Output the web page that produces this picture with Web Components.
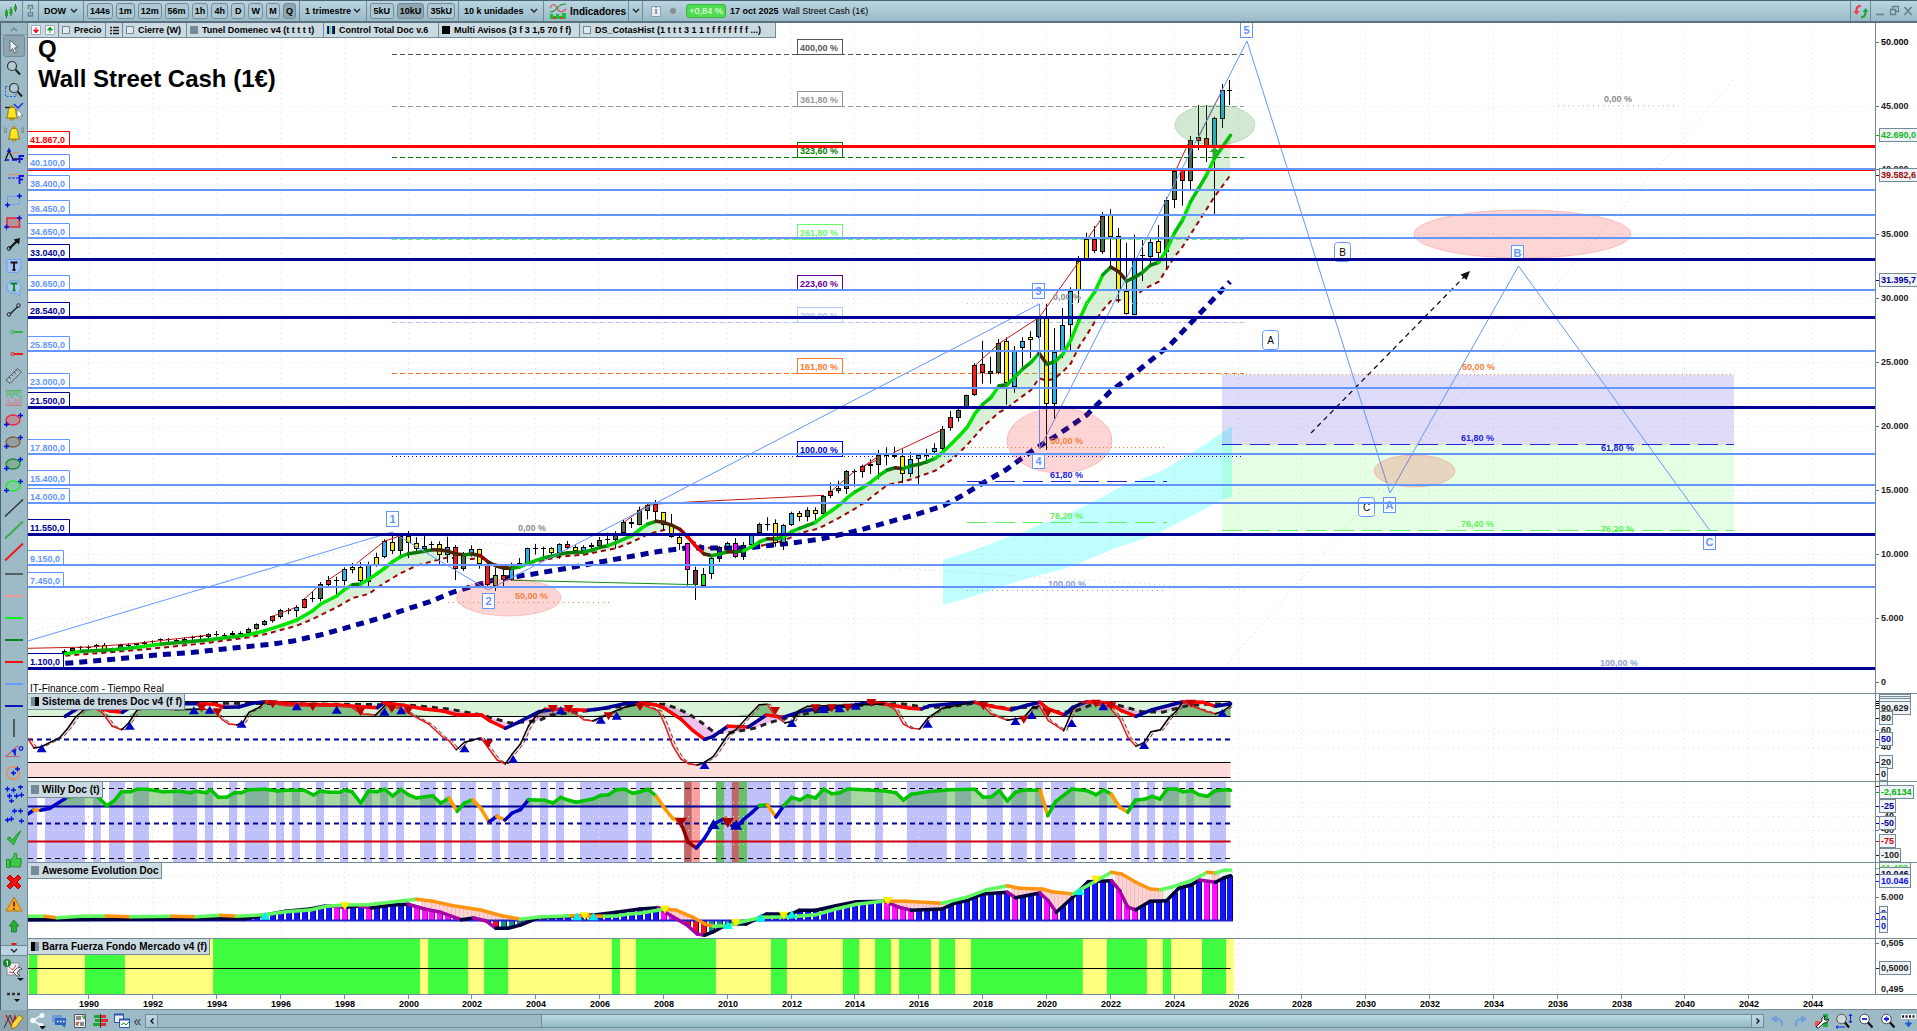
<!DOCTYPE html>
<html lang="es">
<head>
<meta charset="utf-8">
<title>DOW - Wall Street Cash (1€)</title>
<style>
html,body{margin:0;height:100%;overflow:hidden}
body{font-family:"Liberation Sans",Arial,sans-serif;font-size:10px;color:#000;background:#9dbac7}
</style>
</head>
<body>
<trading-window></trading-window>
<script>
/* ---------- shared helpers ---------- */
const BASE = `*{box-sizing:border-box}button,select,input{font:inherit;color:inherit;margin:0;padding:0;border:0;background:none}svg{display:block}`;
function define(name, css, html, setup){
  const t = document.createElement('template');
  t.innerHTML = `<style>${BASE}${css}</style>${html}`;
  customElements.define(name, class extends HTMLElement{
    connectedCallback(){
      if(this.shadowRoot) return;
      this.attachShadow({mode:'open'}).append(t.content.cloneNode(true));
      if(setup) setup(this, this.shadowRoot);
    }
  });
}
const svg = (w,h,body)=>`<svg width="${w}" height="${h}" viewBox="0 0 ${w} ${h}" fill="none" aria-hidden="true">${body}</svg>`;
const plus = (x,y)=>`<path d="M${x-2} ${y}h5M${x+.5} ${y-2.5}v5" stroke="#0010e0" stroke-width="1.3"/>`;
const lens = `<circle cx="7" cy="6" r="4.5" fill="#b4cbd5" stroke="#333" stroke-width="1.2"/><path d="M10.5 9.5l4.500 5" stroke="#222" stroke-width="2"/>`;
const bell = (x,y)=>`<path d="M${x-6} ${y+9}q2-1 2-5q0-6 4-6q4 0 4 6q0 4 2 5z" fill="#ffe620" stroke="#86700a" stroke-width=".9"/><path d="M${x-2} ${y+9.500}h4v1.500h-4zM${x-1} ${y-3.500}h2v2h-2z" fill="#d8b800" stroke="#86700a" stroke-width=".5"/>`;
const ell = (s,f)=>svg(20,16,`<ellipse cx="9" cy="8" rx="7" ry="5" fill="${f}" stroke="${s}" stroke-width="1.3"/>${plus(2,12.500)}${plus(16,3.500)}`);
const hl = (c,w)=>svg(20,16,`<path d="M1 8h18" stroke="${c}" stroke-width="${w}"/>`);
const dl = (c,w)=>svg(20,18,`<path d="M1 17.500L19 .5" stroke="${c}" stroke-width="${w}"/>`);

const ICON = {
  cursor: svg(20,16,`<path d="M6 2v11l2.500-2.500 2 4.500 2-1-2-4.200h3.500z" fill="#f4f8fa" stroke="#5c6b74"/>`),
  lens: svg(18,16,lens),
  lensbox: svg(20,16,`<path d="M1.500 4.500H12v10H1.500z" stroke="#1668d8" stroke-dasharray="2 1.500"/><g transform="translate(3)">${lens}</g>`),
  bellline: svg(20,18,`<path d="M1 4.500h9" stroke="#222" stroke-width="1.500"/><path d="M10 1l4 4 5-5" stroke="#1030e8" stroke-width="1.400"/>${bell(8,6)}<path d="M13 6v9l2-2 1.500 3.500 1.500-.8-1.500-3.200H19z" fill="#fff" stroke="#777" stroke-width=".8"/>`),
  bell: svg(20,16,`${bell(10,4)}<path d="M3 2q-2 2-.5 5M17 2q2 2 .5 5M1 1q-2 3 0 6M19 1q2 3 0 6" stroke="#777" stroke-width=".8"/>`),
  fibo1: svg(20,16,`<path d="M1 13L5 3l4 8h6" stroke="#111" stroke-width="1.300"/><path d="M6 4.500h9" stroke="#f08050" stroke-dasharray="1.500 1"/><path d="M1 12h4M8 12h5M5 0v5M3 3h4" stroke="#1010e0" stroke-width="1.500"/><path d="M15.500 15V8H20M15.500 11H19" stroke="#1010e0" stroke-width="1.800"/>`),
  fibo2: svg(20,16,`<path d="M4 4.500h11" stroke="#f08050" stroke-width="1.500" stroke-dasharray="1.500 1"/><path d="M4 8h11" stroke="#4050e8" stroke-width="1.500" stroke-dasharray="3 1"/><path d="M15.500 14V6H20M15.500 9.500H19" stroke="#1010e0" stroke-width="1.800"/>`),
  rect1: svg(20,16,`<path d="M3.500 4.500h12v8h-12z" stroke="#6d9cf8"/>${plus(3,13)}${plus(15,4)}`),
  rect2: svg(20,16,`<path d="M3 4h12.500v9H3z" fill="#b0959f" stroke="#f02030" stroke-width="1.500"/>${plus(2,13)}${plus(15,4)}`),
  arrow: svg(20,16,`<path d="M5.500 12.500L13 5" stroke="#111" stroke-width="2.200"/><circle cx="5" cy="12.500" r="1.800" stroke="#111"/><path d="M9.500 3.500L16 2l-1 6.500z" fill="#111"/>`),
  note: svg(20,16,`<path d="M4 1.500h12q1 0 1 1V11l-3.500 3.500H4q-1 0-1-1v-11q0-1 1-1z" fill="#a4c2f0" stroke="#6d9cf8"/><path d="M6.500 4.500h7M10 4.500v7.500M8.500 12h3" stroke="#111" stroke-width="1.800"/>`),
  bubble: svg(20,18,`<path d="M10 1.500a7 6.500 0 1 0 0 13q1 0 2-.4l3.500 3-.5-4.500A7 6.500 0 0 0 10 1.500z" fill="#a4cbe8" stroke="#6d9cf8"/><path d="M6.500 4.500h7M10 4.500v7M8.500 11.500h3" stroke="#168028" stroke-width="1.800"/>`),
  seg: svg(20,16,`<path d="M6 12L14 4.500" stroke="#222" stroke-width="1.400"/><circle cx="5" cy="12.500" r="1.800" stroke="#222"/><circle cx="14.500" cy="3.500" r="1.800" stroke="#222"/>`),
  rayg: svg(20,16,`<path d="M10 8h9" stroke="#35b045" stroke-width="2"/><circle cx="8.500" cy="8" r="1.600" stroke="#35b045"/>`),
  rayr: svg(20,16,`<path d="M10 8h9" stroke="#f01818" stroke-width="2"/><circle cx="8.500" cy="8" r="1.600" stroke="#f01818"/>`),
  ruler: svg(20,18,`<path d="M2 13L13.500 1.500l4 3.500L6 16.500z" fill="#a8bcc6" stroke="#556" /><path d="M5 10l2 2M7.500 7.500l1.500 1.500M10 5l2 2M12.300 2.700l1.500 1.500" stroke="#556"/>`),
  wave: svg(20,18,`<path d="M2 1h16v8H2z" fill="#7cb894"/><path d="M2 9h16v8H2z" fill="#b3a2ab"/><path d="M2 1.500h16" stroke="#38a050" stroke-dasharray="1 1"/><path d="M2 16.500h16" stroke="#e05060" stroke-dasharray="1 1"/><path d="M2 11l3-4 3 6 3-7 2 4 4-6" stroke="#a8c0ff"/>`),
  vline: svg(20,18,`<path d="M10 0v18" stroke="#222" stroke-width="1.300"/>`),
  angle: svg(20,16,`<path d="M16 14.500H2L14 3.500" stroke="#d06070" stroke-width="1.200"/><path d="M8.500 9q4 1 2.500 5M8 8.500l4-1-1 4z" stroke="#1020e0" fill="#1020e0"/><circle cx="17" cy="6.500" r="1.800" stroke="#1020e0" stroke-width="1.300"/>`),
  circ: svg(20,16,`<circle cx="9" cy="9" r="6.300" stroke="#f08850" stroke-width="1.400"/>${plus(9,9)}${plus(13,5)}`),
  elliott: svg(20,18,`<path d="M2 5l3 9 4-9 3 8 5-10" stroke="#7d9ef8"/>${plus(3,4)}${plus(9,5)}${plus(16,2)}${plus(5,11)}${plus(12,11)}${plus(17,10)}${plus(7,16)}`),
  abc: svg(20,18,`<path d="M4 2l13 13M3 13L14 3" stroke="#7d9ef8"/>${plus(10,4)}${plus(16,4)}${plus(7,12)}${plus(17,14)}${plus(3,13)}`),
  check: svg(20,16,`<path d="M3 8.500l3-1.500 2.500 3.500Q12 4 17 .8q-4 6-7.500 14z" fill="#30c83c" stroke="#128820" stroke-width=".8"/>`),
  thumb: svg(20,18,`<path d="M2.500 8.500H6v8H2.500zM6.500 9q4-2 4-7 2.500-.5 2.500 2.500l-.5 3H17q1 3-.8 8.500H8l-1.500-1z" fill="#3fc84a" stroke="#1c8a28" stroke-width=".9"/>`),
  cross: svg(20,16,`<path d="M3 4l3-3 4 4 4-4 3 3-4 4 4 4-3 3-4-4-4 4-3-3 4-4z" fill="#f01010" stroke="#b00"/>`),
  warn: svg(20,16,`<path d="M10 1l8 14H2z" fill="#f5a820" stroke="#b87812" stroke-linejoin="round"/><path d="M10 5.500v5M10 12v1.800" stroke="#6b2a00" stroke-width="1.800"/>`),
  up: svg(20,16,`<path d="M10 2l5 6h-2.500v6h-5V8H5z" fill="#2eaa36" stroke="#167a1c" stroke-width=".8"/>`),
  gear: svg(24,24,`<path d="M5 5h12v12H5z" fill="#eef2f4" stroke="#889"/><path d="M7 9l4 3 3-5M7 14l6 1" stroke="#e04050"/><circle cx="5" cy="5" r="4" fill="#128a28"/><path d="M4 4l1.500-1v4.500" stroke="#fff"/><path d="M11 14l4-4q3-2 5 1l-3 1-2 3 3 3q-4 1-5-2z" fill="#f4f4f4" stroke="#333" stroke-width=".8"/><path d="M15 20h7l-3.500 3z" fill="#111"/>`),
  dots: svg(20,12,`<path d="M3 3h3M8 3h3M13 3h3" stroke="#333" stroke-width="2.500"/><path d="M10 8h6l-3 3z" fill="#111"/>`),
  pencil: svg(22,18,`<path d="M3 3l6 12 3-11 2 8" stroke="#b81820" stroke-width="1.200"/><path d="M1 16l6-13 5 12" stroke="#333"/><path d="M9 12L16 3l4 3-7 9-5 2z" fill="#ffd83a" stroke="#8a6a10" stroke-width=".8"/>`),
  candles: svg(14,15,`<path d="M2.500 5v9M7 3v9M11.500 0v8" stroke="#1b7a22"/><path d="M1 7h3v5H1zM5.500 5h3v5h-3zM10 2h3v4h-3z" fill="#27a32c"/>`),
  link: svg(8,16,`<path d="M1.500 6V2.500h4V6M1.500 9v4h4V9" stroke="#66808c" stroke-width="1.500"/><path d="M3.500 5v6" stroke="#66808c"/>`),
  ind: svg(18,17,`<path d="M1 5q4-7 7 0t9 1" stroke="#e05058" stroke-width="1.200"/><path d="M1 9q4 0 7-4t9-4" stroke="#1f8f2a" stroke-width="1.200"/><path d="M1 11h3v2h3v-2h3v2h3v-3h4v6H1z" fill="#16c030"/><path d="M4 14h3v2H4zM11 14h3v2h-3z" fill="#f03030"/>`),
  sync: svg(16,15,`<path d="M8 2Q3 1.500 3.500 8" stroke="#f04048" stroke-width="2.200"/><path d="M.5 7h6l-3 4z" fill="#f04048"/><path d="M8 13q5 .5 4.500-6" stroke="#22a830" stroke-width="2.200"/><path d="M9.500 8h6l-3-4z" fill="#22a830"/>`),
  share: svg(18,18,`<path d="M13 3L4 8.500l9 5.500" stroke="#f4f8fa" stroke-width="1.500"/><circle cx="13" cy="3.500" r="2.500" fill="#f4f8fa"/><circle cx="4" cy="8.500" r="2.800" fill="#f4f8fa"/><circle cx="12" cy="13.500" r="2.500" fill="#f4f8fa"/><path d="M10 14h7l-3.500 3.500z" fill="#111"/>`),
  chat: svg(16,16,`<path d="M1 2h10v7H5l-2 2V9H1z" fill="#6f9ad8"/><path d="M4 5h11v7h-1v3l-3-3H4z" fill="#2f66c0"/><path d="M6 8.500h1.500M9 8.500h1.500M12 8.500h1.500" stroke="#fff" stroke-width="1.500"/>`),
  doc: svg(14,16,`<path d="M1.500 1.500h11v13h-11z" fill="#f2f4f4" stroke="#556"/><path d="M3 4h5M3 6h5M7 10h4M7 12h4" stroke="#222"/><path d="M9 3l2 3 .8-3zM3 9l2 4" stroke="#1da030"/><path d="M3 12l3-3" stroke="#e02828" stroke-width="1.500"/>`),
  book: svg(16,16,`<path d="M1 2h6v3H1zM2 6h5v3H2zM0 10h7v3H0z" fill="#21a832"/><path d="M8 2h5v3H8zM8 6h7v3H8zM8 10h5v3H8z" fill="#e02a38"/><path d="M7.500 1v14" stroke="#333"/>`),
  wins: svg(18,16,`<path d="M1.500 1.500h9v8h-9z" fill="#eef" stroke="#2858b0"/><path d="M1 1.500h10" stroke="#2858b0" stroke-width="2"/><path d="M6.500 6.500h10v8h-10z" fill="#fff" stroke="#2858b0"/><path d="M6 6.500h11" stroke="#2858b0" stroke-width="2"/><path d="M8 12l3-2 2 2 3-3" stroke="#1b9030"/>`),
  undo: svg(14,14,`<path d="M4 5q8-1 7 7" stroke="#6f9fe0" stroke-width="2"/><path d="M0 5l6-4v8z" fill="#6f9fe0"/>`),
  redo: svg(14,14,`<path d="M10 5q-8-1-7 7" stroke="#6f9fe0" stroke-width="2"/><path d="M14 5L8 1v8z" fill="#6f9fe0"/>`),
  wrench: svg(16,16,`<path d="M1 8h5v6H1z" fill="#f05058"/><path d="M9 1h5v13H9z" fill="#22b040"/><path d="M2 14l6-6q-1-4 3-5l-1 3 2 1.500 2.500-1.500q0 4-4.500 4l-5.500 5z" fill="#fff" stroke="#222"/>`),
  zfit: svg(18,16,`<circle cx="6.500" cy="6" r="4.800" fill="#cfd8dc" stroke="#555"/><path d="M10 9.500l4 5" stroke="#111" stroke-width="2.200"/><path d="M15.500 1v9M14 3l1.500-2L17 3M14 8l1.500 2L17 8M1 14h9M3 12.500L1 14l2 1.500" stroke="#1020e0"/>`),
  zout: svg(16,16,`<circle cx="6.500" cy="6" r="4.800" fill="#fff" stroke="#445"/><path d="M4 6h5" stroke="#1020e0" stroke-width="1.800"/><path d="M10 9.500l4.500 5" stroke="#111" stroke-width="2.200"/>`),
  zin: svg(16,16,`<circle cx="6.500" cy="6" r="4.800" fill="#fff" stroke="#445"/><path d="M4 6h5M6.500 3.500v5" stroke="#1020e0" stroke-width="1.800"/><path d="M10 9.500l4.500 5" stroke="#111" stroke-width="2.200"/>`),
  kbd: svg(15,14,`<path d="M0 0h15v5H0z" fill="#f4f4f4"/><path d="M1 2.500h13" stroke="#222" stroke-width="2.500" stroke-dasharray="2 1.500"/><path d="M7.500 6v4M4.500 9h6l-3 4z" stroke="#1c5fd0" fill="#1c5fd0"/>`),
  chev: svg(8,6,`<path d="M1 1l3 3 3-3" stroke="#223" stroke-width="1.400"/>`),
  list: svg(9,9,`<path d="M0 1.500h2M0 4.500h2M0 7.500h2M3 1.500h6M3 4.500h6M3 7.500h6" stroke="#222" stroke-width="1.300"/>`),
  dn: svg(10,10,`<path d="M.5.5h9v9h-9z" fill="#fff" stroke="#9ab"/><path d="M5 2v3M2.500 5h5L5 8z" stroke="#e02028" fill="#e02028"/>`),
  upg: svg(10,10,`<path d="M.5.5h9v9h-9z" fill="#fff" stroke="#9ab"/><path d="M5 8V5M2.500 5h5L5 2z" stroke="#18a028" fill="#18a028"/>`)
};

/* ---------- geometry of the data blocks (each block has its own origin) ---------- */
const N = s => s.trim().split(/\s+/).map(p=>p.split(',').map(Number));
const block = (ox,oy,k)=> s => N(s).map(([x,y])=>[ox+x/k, oy+y/3]);
const T1=block(0,240,3), T2=block(380,440,3), T3=block(860,200,3), T4=block(600,0,2.45);
const L=block(0,680,2.45), R=block(640,680,2.45);
const QX = i => 65.4 + 7.98*i;              // centre of quarter i
const YX = y => 89.4 + (y-1990)*31.92;      // start of year y
const PY = v => 682 - v*.0128;              // price to height
const END = 1230.6;
const d = p => p.map(([x,y],i)=>(i?'L':'M')+x.toFixed(1)+' '+y.toFixed(1)).join('');
const path = (p,c,w,extra='')=>`<path d="${typeof p==='string'?p:d(p)}" stroke="${c}" stroke-width="${w}" fill="none" ${extra}/>`;
const hline = (y,x1,x2,c,w,dash='')=>`<path d="M${x1} ${y}H${x2}" stroke="${c}" stroke-width="${w}" ${dash?`stroke-dasharray="${dash}"`:''}/>`;
const rect = (x,y,w,h,f,extra='')=>`<rect x="${x.toFixed(1)}" y="${y.toFixed(1)}" width="${w.toFixed(1)}" height="${h.toFixed(1)}" fill="${f}" ${extra}/>`;
const text = (x,y,s,c,cls='t')=>`<text x="${x}" y="${y}" fill="${c}" class="${cls}">${s}</text>`;
const tri = (p,dir,c,w=5,h=4)=>p.map(([x,y])=>`<path d="M${(x-w).toFixed(1)} ${(y+dir*h).toFixed(1)}h${2*w}l${-w} ${-dir*2*h}z" fill="${c}"/>`).join('');
function sample(p,x){ for(let i=1;i<p.length;i++) if(x<=p[i][0]){const a=p[i-1],b=p[i];return a[1]+(b[1]-a[1])*(x-a[0])/((b[0]-a[0])||1);} return p[p.length-1][1]; }
function twoTone(p,pick,w){ return p.slice(1).map((b,i)=>`<path d="M${p[i][0].toFixed(1)} ${p[i][1].toFixed(1)}L${b[0].toFixed(1)} ${b[1].toFixed(1)}" stroke="${pick(p[i],b)}" stroke-width="${w}" stroke-linecap="round"/>`).join(''); }
function grid(y1,y2,hs){
  let o='';
  for(let y=1990;y<=2060;y+=2) o+=`<path d="M${Math.round(YX(y))-.5} ${y1}V${y2}" stroke="#e2e2e2" stroke-dasharray="1 4"/>`;
  hs.forEach(h=>o+=hline(Math.floor(h)+.5,28,4000,'#e2e2e2',1,'1 4'));
  return o;
}

/* ---------- price pane ---------- */
const BODY={g:'#4f6b4f',y:'#f7ee10',b:'#28b4e8',r:'#fa1c1c',o:'#7fa848',m:'#ff00ff',w:'#6e3348',l:'#10f010',c:'#20f0f0',n:'#1414a0',k:'#111'};
const candles1=`1228 1234 1240 1244 g|1222 1223 1234 1238 g|1218 1222 1224 1230 k|1216 1220 1223 1232 k|1212 1216 1222 1226 g|1209 1215 1235 1238 y|1223 1225 1235 1238 b|1211 1216 1226 1232 g|1210 1215 1217 1224 k|1209 1210 1216 1220 g|1203 1206 1212 1222 g|1201 1202 1205 1211 k|1195 1198 1200 1207 k|1194 1198 1201 1208 k|1197 1201 1204 1212 k|1192 1196 1202 1208 g|1187 1192 1194 1201 k|1185 1189 1192 1198 k|1180 1182 1190 1195 g|1173 1182 1185 1190 k|1179 1184 1187 1193 k|1173 1180 1186 1194 g|1174 1179 1182 1188 k|1163 1168 1180 1184 g|1150 1153 1168 1171 g|1140 1144 1154 1157 g|1127 1129 1144 1148 r|1107 1111 1130 1136 g|1104 1110 1112 1123 k|1096 1102 1112 1132 b|1074 1077 1103 1105 r|1054 1075 1078 1086 k|1026 1033 1076 1084 g|1008 1020 1034 1039 r|1010 1020 1023 1063 k|982 988 1024 1036 b|969 982 990 1000 y|966 982 1024 1036 y|965 974 1027 1038 b|938 952 974 980 y|898 904 952 955 b|886 906 932 942 y`;
const candles2=`283 288 332 345 g|273 287 308 354 y|292 310 326 336 y|288 318 326 338 b|304 313 316 334 k|304 312 346 372 y|290 322 346 368 b|315 321 388 420 r|336 342 388 393 g|316 328 342 350 b|326 328 372 386 y|362 376 436 440 r|384 405 437 453 o|384 405 421 438 r|368 381 421 422 b|354 370 384 386 b|323 325 370 372 b|312 325 328 344 k|320 325 328 348 k|322 325 340 348 y|310 312 340 356 b|303 313 323 328 r|316 322 332 340 y|316 321 332 344 b|308 316 322 337 b|291 300 317 320 g|278 298 301 319 k|274 278 300 326 g|240 246 278 280 g|234 246 253 264 r|200 210 254 256 g|190 194 212 238 g|180 192 217 240 r|216 217 256 270 y|222 254 292 293 y|278 290 311 330 y|308 310 391 437 m|380 391 434 480 w|384 403 437 438 l|348 355 403 417 c|318 322 356 366 n|305 310 322 336 b|294 310 352 354 m|306 314 352 360 n|282 286 314 320 b|248 252 279 284 g|232 251 254 272 k|238 250 308 320 y|252 256 308 330 b|215 219 256 258 b|213 220 232 244 y|202 210 232 244 g|202 210 223 246 y|165 167 223 224 g|128 153 167 174 r|122 145 154 160 g|90 92 146 162 g|88 92 95 140 k`;
const candles3=`794 799 815 833 r|778 793 798 822 r|750 764 794 838 g|742 764 766 796 k|740 765 769 775 r|748 769 821 850 y|757 778 821 832 b|760 766 778 852 b|746 758 768 792 b|730 745 757 760 b|678 688 746 750 g|633 652 683 692 r|625 629 654 665 g|584 586 622 626 g|490 496 586 588 r|422 493 520 551 r|470 513 523 551 g|417 430 520 523 g|412 424 550 614 y|438 452 562 578 b|412 423 445 500 b|394 411 419 474 y|350 352 412 415 g|312 347 613 750 y|384 457 613 656 b|324 376 457 474 b|262 272 376 450 b|168 183 270 308 y|98 117 178 180 y|78 117 154 160 r|36 48 155 162 g|28 46 110 208 y|84 109 274 308 y|128 274 341 344 y|104 173 344 346 b|120 165 168 243 k|114 127 170 197 b|75 124 160 176 y|-8 1 155 206 g|-90 -88 -1 24 g|-92 -90 58 17 r|-192 -179 -58 -32 g|-285 -188 -178 -150 r|-285 -185 -160 -114 r|-250 -245 -155 42 b|-348 -330 -244 -216 b|-360 -330 -328 -285 k`.replace('-90 58 17','-90 -58 17');
function candleRun(src,start,oy){
  return src.split('|').map((row,n)=>{
    const [h,t,b,l,c]=row.split(' '); const x=Math.round(QX(start+n)), Y=v=>oy+v/3;
    const top=Math.round(Y(+t)), bot=Math.max(top+1,Math.round(Y(+b)));
    let o=`<path d="M${x-.5} ${Y(+h).toFixed(1)}V${Y(+l).toFixed(1)}" stroke="#000"/>`;
    if(c==='k') o+=`<path d="M${x-3} ${top+.5}h5" stroke="#000"/>`;
    else o+=`<rect x="${x-2.5}" y="${top+.5}" width="4" height="${Math.max(1,bot-top-1)}" fill="${BODY[c]}" stroke="#000"/>`;
    return o;
  }).join('');
}
const onQ = (s,oy)=>N(s).map(([i,y])=>[QX(i),oy+y/3]);
const MA=[...onQ('0,1241 2,1234 6,1229 9,1222 12,1212 15,1206 18,1199 21,1190 23,1184 25,1172 27,1157 29,1140 31,1112 32,1092 34,1068 35,1048 36,1034 37,1032 38,1018 39,1002',240),
 ...onQ('40,385 41,365 42,350 43,341 45,334 46,329 47,330 48,334 49,342 50,344 51,342 52,347 53,366 54,378 55,385 56,385 57,380 58,370 59,361 60,353 61,348 62,342 63,338 64,337 65,336 66,330 67,322 68,317 69,308 70,297 71,287 72,268 73,252 74,244 75,247 76,256 77,268 78,291 79,319 80,341 81,347 82,342 83,335 84,336 85,332 86,320 87,305 88,296 89,297 90,291 91,275 92,265 93,256 94,247 95,228 96,212 97,195 98,173 99,155',440),
 ...onQ('100,862 101,845 102,826 103,810 104,803 105,806 106,797 107,793 108,785 109,775 110,755 111,732 112,708 113,682 114,640 115,612 116,592 117,557 118,554 119,530 120,506 121,487 122,460 123,492 124,485 125,462 126,420 127,362 128,310 129,275 130,224 131,201 132,215 133,243 134,232 135,217 136,195 137,187 138,150 139,98 140,60 141,5 142,-35 143,-75 144,-125 145,-160 146,-194',200)];
const LOW=[...onQ('0,1247 6,1236 9,1230 12,1223 15,1216 18,1208 23,1192 25,1183 27,1170 29,1157 31,1137 32,1125 34,1102 36,1074 38,1062',240),
 ...onQ('40,428 42,400 44,377 46,364 47,358 48,352 49,356 50,358 51,357 52,352 53,368 55,380 57,378 58,370 60,360 62,350 65,344 67,334 69,325 71,306 73,283 75,270 77,268 78,294 79,310 80,320 81,325 82,330 83,335 85,330 87,318 89,308 90,302 92,280 94,268 95,258 97,233 99,205',440),
 ...onQ('100,910 103,855 104,850 106,838 109,812 111,780 113,735 115,680 117,637 118,625 119,605 121,570 122,535 123,542 124,535 125,515 126,490 127,440 128,405 129,365 130,330 131,303 132,300 133,305 134,290 135,270 136,257 137,245 138,208 139,170 140,140 142,65 144,-10 146,-75',200)];
const SLOW=[...T1('196,1270 340,1258 460,1246 580,1237 700,1224 820,1212 880,1203 960,1185 1040,1163 1120,1140'),
 ...T2('15,530 60,514 150,485 220,456 300,432 350,418 460,402 560,385 660,366 760,348 840,334 920,324 1100,324 1210,312 1320,298'),
 ...T3('0,990 90,965 170,943 250,917 310,885 350,860 440,808 520,750 600,700 680,645 750,575 830,515 930,435 1010,350 1110,245')];
const maTone=(a,b)=>{const s=(a[1]-b[1])/(b[0]-a[0])*250/(682-a[1]);return s>.9?'#00e400':s>.65?'#00c40a':s>.4?'#00a00a':s>.02?'#067a06':s>-1.1?'#4c2405':s>-1.6?'#980404':'#ec0000';};
const NAVY='#000096', SKY='#6496ff';
const LEVELS=[[40100,SKY],[38400,SKY],[36450,SKY],[34650,SKY],[33040,NAVY],[30650,SKY],[28540,NAVY],[25850,SKY],[23000,SKY],[21500,NAVY],[17800,SKY],[15400,SKY],[14000,SKY],[11550,NAVY],[9150,SKY],[7450,SKY],[1100,NAVY],[41867,'#ff0000']];
const es=v=>String(v).replace(/(\d)(\d{3})$/,'$1.$2')+',0';
const FIB=[[54,'400,00 %','#555','5 3'],[106,'361,80 %','#969696','5 3'],[157,'323,60 %','#008000','5 3'],[239,'261,80 %','#6cf66c','5 3'],[290,'223,60 %','#6a0098','5 3'],[322,'200,00 %','#b4c6ff','5 3'],[373,'161,80 %','#ff7a30','5 3'],[456,'100,00 %','#0000d8','1 3']];
const oval=(x1,x2,y1,y2,f,s)=>`<ellipse cx="${(x1+x2)/2}" cy="${(y1+y2)/2}" rx="${(x2-x1)/2}" ry="${(y2-y1)/2}" fill="${f}" stroke="${s}"/>`;
const PINK='rgba(250,20,20,.18)', PINKS='rgba(250,90,90,.3)';
const tag=(x,y,s)=>`<rect x="${x+.5}" y="${y+.5}" width="12" height="15" fill="#fff" stroke="${SKY}"/><text x="${x+6.5}" y="${y+12}" text-anchor="middle" fill="${SKY}" class="wave">${s}</text>`;
const note=(x,y,s)=>`<rect x="${x+.5}" y="${y+.5}" width="16" height="19" rx="3" fill="#fff" fill-opacity=".85" stroke="${SKY}"/><text x="${x+8.5}" y="${y+14}" text-anchor="middle" class="note">${s}</text>`;
const redRuns=[T1('84,1225 268,1221 412,1210 628,1185'),T1('817,1129 889,1102'),T1('913,1077 961,1033'),T1('985,1020 1033,988'),T1('1070,970 1153,904 1201,887'),T2('733,246 805,193 829,191'),T2('829,192 930,186 1330,166'),T2('1354,153 1426,92'),T2('1450,79 1498,57'),T3('10,799 58,767'),T3('100,758 250,688'),T3('346,496 418,430 538,352 658,183'),T3('682,117 730,48'),T4('1413,505 1445,421'),T4('1466,412 1525,270')];
function drawPrice(){
  let o=grid(23,694,[5,10,15,20,25,30,35,45].map(k=>PY(k*1000)));
  o+=path('M28 633L392 537L880 567L1245 590M1225 667L1734 79','#cfcfcf',1,'stroke-dasharray="1 4"');
  o+=`<path d="${d(T3('249,1080 322,1057 490,995 540,973 600,955 700,905 780,862 830,843 900,815 985,765 1116,679 1116,890 1090,898 1000,945 900,997 840,1020 760,1047 640,1097 600,1110 520,1130 440,1155 322,1195 249,1215'))}z" fill="rgba(0,255,255,.25)"/>`;
  o+=rect(1222,375,512,70,'rgba(20,10,210,.14)')+rect(1222,445,512,86,'rgba(0,255,0,.1)');
  FIB.forEach(([y,s,c,ds])=>{ o+=`<rect x="797.5" y="${y-14.5}" width="45" height="15" fill="#fff" stroke="${c}"/>`+text(800,y-3,s,c)+hline(y+.5,392,1244,c,1,ds); });
  o+=`<path d="${d(MA)}${d([...LOW].reverse()).replace('M','L')}z" fill="rgba(90,190,90,.24)"/>`;
  o+=path(LOW,'#980808',2,'stroke-dasharray="5 4"');
  o+=path(SLOW,NAVY,5,'stroke-dasharray="8 6"');
  o+=candleRun(candles1,0,240)+candleRun(candles2,42,440)+candleRun(candles3,100,200);
  o+=twoTone(MA,maTone,3.500);
  redRuns.forEach(r=>o+=path(r,'#c01818',1));
  o+=path(T2('397,421 949,434'),'#109010',1);
  o+=path([[28,641],[392,532],[488,590],[1039.500,304],[1039.500,449],[1247,41],[1390,493],[1518.500,266],[1709.500,530]],SKY,1);
  o+=`<path d="M1214.500 147l5 5h-3v6h-4v-6h-3z" fill="#2ea82e"/>`;
  o+=oval(456.500,561,579,616,PINK,PINKS)+oval(1007,1112,408,473,PINK,PINKS)+oval(1414,1631,210,258,PINK,PINKS)+oval(1374,1455,455,487,PINK,PINKS)+oval(1175,1255,105,145,'rgba(50,150,50,.22)','rgba(70,160,70,.25)');
  o+=`<path d="M1311 433L1465 276" stroke="#111" stroke-width="1.300" stroke-dasharray="5 4"/><path d="M1470 271l-9.500 3.500 6 5.500z" fill="#111"/>`;
  const OR='#f58040',BL='#2424d8',GR='#60f060',GY='#8c8c8c',BG='#8ea2d0';
  o+=hline(374.500,1222,1734,OR,1,'1 3')+hline(444.500,1222,1734,BL,1,'20 8')+hline(530.500,1222,1734,GR,1,'20 8')+hline(105.500,1558,1676,'#c8c8c8',1,'1 4');
  o+=hline(303.500,967,1164,'#c0c0c0',1,'1 4')+hline(447.500,967,1164,OR,1,'1 3')+hline(481.500,967,1167,BL,1,'20 8')+hline(522.500,967,1167,GR,1,'20 8')+hline(590.500,967,1164,'#999',1,'1 4')+hline(602.500,448,613,OR,1,'1 4');
  o+=text(1462,370,'50,00 %',OR)+text(1461,441,'61,80 %',BL)+text(1601,451,'61,80 %',BL)+text(1461,527,'76,40 %',GR)+text(1601,532,'76,20 %',GR)+text(1600,666,'100,00 %',BG)+text(1604,102,'0,00 %',GY);
  o+=text(518,531,'0,00 %',GY)+text(515,599,'50,00 %',OR)+text(1053,300,'0,00 %',GY)+text(1050,444,'50,00 %',OR)+text(1050,478,'61,80 %',BL)+text(1050,519,'76,20 %',GR)+text(1048,587,'100,00 %',BG);
  o+=tag(386,511,'1')+tag(482,593,'2')+tag(1032,283,'3')+tag(1032,453,'4')+tag(1240,22,'5')+tag(1383,497,'A')+tag(1511,245,'B')+tag(1703,534,'C');
  o+=note(1262,330,'A')+note(1334,242,'B')+note(1358,497,'C');
  LEVELS.forEach(([v,c])=>{const y=Math.round(PY(v)),w=v<10000?36:42;o+=`<path d="M28 ${y-14.500}H${28+w-.5}V${y}" fill="none" stroke="${c}"/>`+rect(28,y-14,w-1,14,'#fff')+text(30,y-3,es(v),c);});
  LEVELS.forEach(([v,c])=>{const y=Math.round(PY(v));const t=c===SKY?2:3;o+=rect(28,y-1,4000,t,c);if(v===40100)o+=rect(28,y+1,4000,1,'#ff0000');});
  o+=text(38,57,'Q','#000','big')+text(38,87,'Wall Street Cash (1€)','#000','big')+text(30,692,'IT-Finance.com - Tiempo Real','#000','src');
  return o;
}

/* ---------- oscillator panes ---------- */
const THIN=[...L('68,178 83,207 100,204 147,175 165,150 185,115 205,92 235,90 250,100 275,142 298,152 315,132 335,95 345,88 430,92 500,90 525,96 545,122 560,135 580,138 595,130 610,100 635,85 650,68 700,80 820,82 860,84 885,104 920,108 945,78 985,90 1005,105 1050,135 1085,175 1100,185 1118,212 1138,190 1178,176 1198,210 1218,243 1238,255 1255,225 1275,195 1295,140 1315,108 1335,88 1390,92 1410,105 1430,122 1452,126 1490,105 1530,85'),...R('0,75 45,95 60,135 80,200 100,240 120,255 140,258 155,252 180,232 215,168 235,152 270,105 292,77 312,76 330,110 355,132 375,125 388,95 410,82 450,80 520,78 600,75 625,92 645,135 665,148 685,150 705,118 740,88 820,68 835,72 860,105 900,124 940,116 960,88 978,80 1000,125 1038,155 1060,92 1080,70 1120,75 1150,85 1175,120 1195,175 1215,202 1235,190 1252,158 1275,152 1295,118 1315,95 1330,68 1360,85 1390,98 1410,104 1430,95 1447,80')];
const THICK=[...L('160,112 200,80 230,82 270,96 300,100 325,80 420,74 490,74 525,76 550,85 585,84 620,72 650,68 730,76 830,78 890,84 925,86 940,72 960,74 1000,82 1040,90 1085,96 1120,107 1180,108 1200,125 1238,148 1270,130 1320,98 1360,90 1440,94 1480,88 1530,74'),...R('0,72 40,78 60,88 100,120 130,155 158,181 180,172 215,142 265,144 310,108 350,115 400,95 450,88 530,78 560,70 600,75 660,88 690,90 710,80 760,75 820,70 860,82 910,92 950,78 980,70 1000,90 1040,108 1060,85 1095,68 1150,72 1180,95 1215,112 1255,92 1330,68 1380,70 1410,82 1447,74')];
const DASH=[...L('250,74 430,72 700,74 1000,78 1100,90 1180,108 1250,132 1320,125 1350,108 1440,95'),...R('0,75 60,76 90,88 120,105 150,130 180,158 215,162 280,148 320,130 380,110 460,92 560,76 640,74 700,85 760,84 820,72 900,88 960,84 1020,98 1060,100 1110,75 1170,78 1230,98 1280,100 1340,80 1400,75 1447,76')];
function drawTrenes(){
  let o=grid(694,782,[732,748]);
  o+=rect(28,702,END-28,15,'#d8f3d8')+rect(28,763,END-28,15,'#fddcdc');
  const drop=THIN.map(([x,y])=>[x,Math.min(y,717)]);
  o+=`<path d="${d(drop)}V717H28z" fill="#80c080"/>`;
  const shade=THIN.map(([x,y])=>[x+4,y]).reverse();
  o+=`<path d="${d(THIN)}${d(shade).replace('M','L')}z" fill="rgba(250,150,150,.35)"/>`;
  o+=`<path d="${d(THICK)}${d([...DASH].reverse()).replace('M','L')}z" fill="rgba(220,120,220,.45)"/>`;
  o+=hline(702.500,28,END,'#000',1)+hline(717.500,28,END,'#000',1)+hline(763.500,28,END,'#000',1)+hline(778.500,28,END,'#000',1)+hline(740.500,28,END,'#0000a0',2,'5 4');
  o+=path(DASH,'#222',3,'stroke-dasharray="6 5"');
  o+=twoTone(THICK,(a,b)=>b[1]>a[1]?'#ff0000':NAVY,3.500);
  o+=path(THIN.map(([x,y])=>[x+3,y]),'#444',1,'stroke-dasharray="4 3"');
  o+=twoTone(THIN,(a,b)=>b[1]>a[1]?'#e02020':'#000',1.500);
  o+=tri([...L('102,208 318,140 475,94 514,92 592,134 727,82 825,92 942,98 983,94 1138,208 1257,240 1374,94 1472,122 1511,110'),...R('158,258 372,132 450,90 489,88 529,80 705,134 920,126 960,108 1058,132 1135,82 1235,198 1427,102')],1,'#0000c0');
  o+=tri([...L('494,88 533,100 668,76 766,84 883,98 960,90 1001,94 1196,194 1354,90 1393,90 1491,112'),...R('0,84 331,96 430,88 470,88 509,86 567,72 841,82 940,122 999,102 1117,74 1155,82 1350,74')],-1,'#c00000');
  return o;
}
const WIL=[...L('68,405 83,393 100,394 122,388 165,355 190,350 230,345 245,360 262,380 280,365 298,338 320,338 335,331 360,331 400,338 440,337 465,341 480,337 505,341 516,332 535,355 555,355 575,341 592,341 610,332 650,331 680,336 700,334 745,334 768,348 785,336 805,340 832,340 845,333 862,338 884,372 903,336 923,338 943,331 962,351 982,331 1000,347 1020,357 1060,350 1080,373 1100,357 1120,397 1138,372 1158,362 1178,388 1198,429 1217,412 1237,423 1255,402 1275,392 1295,362 1335,364 1355,372 1374,355 1393,364 1412,370 1452,360 1472,349 1490,348 1510,332 1530,331 1550,343'),...R('0,338 20,331 40,352 60,388 80,418 100,430 118,490 138,507 158,478 180,435 210,417 225,440 240,440 255,420 275,400 292,380 312,377 333,414 352,380 372,355 392,363 410,350 430,357 450,330 470,344 490,341 509,330 550,332 600,336 627,341 645,363 665,346 705,338 760,332 820,331 841,355 862,353 880,335 900,366 920,340 940,333 980,334 999,410 1018,368 1058,330 1095,335 1117,347 1136,333 1155,345 1175,385 1195,400 1214,363 1235,361 1255,352 1274,360 1292,330 1313,330 1330,338 1352,335 1370,347 1390,352 1408,336 1430,332 1447,334')];
const spans=(s,ox)=>s.trim().split(/\s+/).map(p=>p.split('-').map(v=>ox+v/2.45));
function drawWilly(){
  let o='';
  [...spans('68-91 110-208 228-247 267-306 326-365 424-483 502-522 561-581 600-659 676-696 715-735 774-794 833-853 892-911 931-951 970-990 1029-1068 1088-1107 1127-1166 1205-1225 1245-1303 1323-1343 1362-1382 1421-1539 1558-1597',0),
   ...spans('206-321 341-380 399-419 439-458 478-517 576-595 654-752 772-811 850-889 909-948 968-987 1007-1066 1125-1144 1203-1223 1242-1262 1281-1321 1338-1357 1396-1436',640)].forEach(([a,b])=>o+=rect(a,783,b-a,80,'#c0c0fa'));
  [['108-127','#c06868'],['127-147','#ff9f9f'],['186-206','#66c066'],['225-243','#c06868'],['243-262','#66c066']].forEach(([s,c])=>spans(s,640).forEach(([a,b])=>o+=rect(a,783,b-a,80,c)));
  o+=grid(783,863,[803,817,831,845]);
  const cap=WIL.map(([x,y])=>[x,Math.min(y,807.5)]);
  o+=`<path d="${d(cap)}V807.500H28z" fill="rgba(50,160,30,.42)"/>`;
  o+=hline(789.500,28,END,'#000',1,'5 4')+hline(859.500,28,END,'#000',1,'5 4')+hline(807.500,28,END,NAVY,2)+hline(824.500,28,END,NAVY,2,'5 4')+hline(842.500,28,END,'#d00010',2);
  o+=twoTone(WIL,(a,b)=>{const lim=680+384/3;if(b[0]>681&&b[0]<698&&b[1]>a[1])return '#900000';if(a[1]<lim&&b[1]<lim)return '#00c400';if(b[1]>a[1])return '#ff9a00';return a[0]>1000||(a[0]>445&&a[0]<470)?'#00c400':'#0000c8';},3.500);
  o+=tri(R('100,431 215,432'),-1,'#a80000',6,5)+tri(R('180,435 236,437'),1,'#0000b4',6,5);
  return o;
}
const UPP=[...L('68,712 110,712 140,716 200,712 260,711 320,713 420,712 480,713 540,709 580,712 650,707 700,698 760,693 800,682 845,678 900,677 960,669 1020,661 1060,667 1110,680 1175,692 1230,710 1275,721 1320,714 1400,710 1480,712 1510,711 1540,705'),...R('0,703 60,690 90,694 130,715 160,736 180,742 215,740 250,728 300,715 370,713 430,707 480,690 530,676 600,666 650,667 740,673 800,655 850,632 900,620 930,628 985,630 1010,638 1060,645 1085,628 1120,604 1155,580 1180,585 1215,610 1250,630 1275,632 1300,625 1350,605 1390,580 1410,582 1430,574 1447,573')];
const LWR=[...L('68,722 300,721 600,719 650,708 700,697 760,690 800,680 845,685 880,681 910,687 960,678 1000,676 1040,690 1080,700 1130,722 1160,717 1190,725 1215,748 1245,748 1275,738 1320,716 1400,712 1460,707 1510,700'),...R('0,690 45,686 60,698 90,720 115,738 140,765 158,769 180,758 215,735 260,735 310,705 370,705 390,694 430,694 480,680 530,668 600,667 635,685 665,694 740,690 770,673 800,665 840,645 900,640 920,656 980,642 1000,665 1020,700 1060,655 1098,608 1155,605 1175,635 1195,685 1215,692 1250,667 1290,665 1320,628 1350,618 1370,603 1410,610 1430,597 1447,590')];
function drawAwesome(){
  let o=grid(863,939,[876,898]); const Z=921;
  for(let i=-4;i<=146;i++){
    const x=QX(i), y=sample(LWR,x), p=sample(LWR,x-7.98), u=sample(UPP,x), up=sample(UPP,x-7.98), fall=y>p+.2, q=Math.round(x);
    const base=Math.min(y,Z);
    if(u<base-1) for(let k=0;k<2;k++) o+=rect(q-4+k*4,u,3,base-u,u>up?'#fbd3d3':'#e2f8e2')+rect(q-1+k*4,u,1,base-u,u>up?'#f4bcbc':'#fff');
    if(y<Z-1) o+=rect(q-3,y,8,Z-y,'#fff')+rect(q-3,y,5,Z-y,fall?'#ff10ff':'#1414ff')+rect(q+2,y,1,Z-y,fall?'#a000a0':'#000078');
    else if(y>Z+1) o+=rect(q-3,Z,8,y-Z,'#fff')+rect(q-3,Z,5,y-Z,fall?'#f01020':'#109090')+rect(q+2,Z,1,y-Z,'#400020');
  }
  o+=hline(921.500,28,1233,'#2020d0',2);
  o+=twoTone(LWR,(a,b)=>b[1]>a[1]+.1?'#a800a8':'#00003c',3.500)+twoTone(UPP,(a,b)=>b[1]>a[1]?'#ff9410':'#60fa60',3.500);
  o+=tri([...L('650,710 1414,712 1454,712'),...R('215,738 295,716 372,706 1077,636')],1,'#00f0f0')+tri([...L('845,682 1433,712'),...R('61,692 235,732 352,710 607,666 1117,602')],-1,'#f8f000');
  return o;
}
function drawBarra(){
  let o=rect(28,940,1206,55,'#ffff80');
  [...spans('71-91 208-306 522-1029 1049-1147 1186-1245 1499-1519 1558-1568',0),...spans('0-186 321-360 497-537 576-615 635-713 733-772 811-1085 1144-1242 1281-1301 1377-1436',640)].forEach(([a,b])=>o+=rect(a,940,b-a,55,'#40fc40'));
  o+=hline(944.500,1234,4000,'#e2e2e2',1,'1 4')+hline(969.500,28,END,'#000',1);
  for(let y=2026;y<=2060;y+=2) o+=`<path d="M${Math.round(YX(y))-.5} 940V995" stroke="#e2e2e2" stroke-dasharray="1 4"/>`;
  return o;
}

/* ---------- scales on the right ---------- */
const A0=1875; // left edge of the scale
const tick=(y,c='#5f7681')=>`<path d="M${A0} ${y+.5}h4" stroke="${c}"/>`;
const plain=(y,s)=>tick(y)+text(1881,y+3,s,'#222');
const boxed=(y,s,c,w)=>tick(y,c)+`<rect x="1879.500" y="${y-6.500}" width="${w}" height="13" fill="#f0f3f5" stroke="#748b97"/>`+text(1881,y+3,s,c);
const AX={
  price:()=>text(1881,45,'50.000','#000')+tick(42)+plain(106,'45.000')+plain(169,'40.000')+[35,30,25,20,15,10,5].map(k=>plain(Math.round(PY(k*1000)),k+'.000')).join('')+plain(682,'0')+boxed(135,'42.690,0','#10b818',60)+boxed(175,'39.582,6','#a00808',60)+boxed(280,'31.395,7',NAVY,60),
  trenes:()=>[697,699,701].map(y=>boxed(y+5,'','#000',31)).join('')+plain(731,'60')+plain(748,'40')+boxed(709,'90,629','#222',31)+boxed(719,'80','#222',13)+boxed(740,'50','#0000b0',13)+boxed(763,'20','#222',13)+boxed(775,'0','#222',8),
  willy:()=>plain(817,'-40')+plain(831,'-60')+boxed(787,'','#222',8)+boxed(793,'-2,6134','#00b810',34)+boxed(807,'-25',NAVY,16)+boxed(824,'-50',NAVY,16)+boxed(842,'-75','#d00010',16)+boxed(856,'-100','#222',21),
  awe:()=>boxed(869,'11.489','#40e040',31)+boxed(875,'10.046','#000040',31)+boxed(882,'10.046','#1010f0',31)+plain(898,'5.000')+boxed(914,'0','#1010f0',8)+boxed(920,'0','#1010f0',8)+boxed(927,'0','#1010f0',8),
  barra:()=>plain(944,'0,505')+boxed(969,'0,5000','#222',31)+text(1881,993,'0,495','#222')
};
const PANES={price:[23,drawPrice],trenes:[695,drawTrenes],willy:[783,drawWilly],awe:[864,drawAwesome],barra:[940,drawBarra]};

/* ---------- elements ---------- */
define('chart-pane',`
:host{display:flex;position:relative;min-height:0;overflow:hidden;background:#fff;border-bottom:1px solid #748b97}
svg{height:100%}.plot{flex:1;min-width:0;width:0}.axis{width:42px;flex:none;border-left:1px solid #748b97}
.head{position:absolute;left:0;top:0}
.t{font-size:9px;font-weight:bold}.big{font-size:24px;font-weight:bold}.src{font-size:10px}.wave{font-size:11px;font-weight:bold}.note{font-size:10px}`,
`<svg class="plot" role="img"><g></g></svg><svg class="axis"><g></g></svg><div class="head"><slot></slot></div>`,
(h,r)=>{
  const k=h.getAttribute('kind'),[top,draw]=PANES[k]; const [p,a]=r.querySelectorAll('g');
  p.setAttribute('transform',`translate(-28,${-top})`); p.innerHTML=draw();
  a.setAttribute('transform',`translate(${-A0-1},${-top})`); a.innerHTML=AX[k]();
});
define('time-axis',`
:host{display:block;height:15px;flex:none;background:#fff;overflow:hidden;border-bottom:1px solid #748b97}
svg{width:100%;height:15px}text{font-size:9px;font-weight:bold;text-anchor:middle}`,
`<svg><g></g></svg>`,(h,r)=>{let o='';for(let y=1990;y<=2044;y+=2){const x=Math.round(YX(y))-28;o+=`<path d="M${x-.5} 0v4" stroke="#748b97"/><text x="${x}" y="12">${y}</text>`;}r.querySelector('g').innerHTML=o;});
define('pane-title',`
:host{display:flex;align-items:center;gap:3px;height:16px;padding:0 2px 0 3px;background:#cbd9e1;border:solid #748b97;border-width:0 1px 1px 0;font-weight:bold;white-space:nowrap}
i{width:8px;height:9px;background:linear-gradient(90deg,var(--a,#748b97) 50%,var(--b,#748b97) 50%)}`,`<i></i><slot></slot>`);
define('study-chip',`
:host{display:flex;align-items:center;height:14px;padding-left:3px;border-right:1px solid #748b97}
label{display:flex;align-items:center;gap:4px;white-space:nowrap}
input{appearance:none;width:8px;height:8px;border:1px solid #748b97;background:var(--mark,#e4ebef);border-color:var(--edge,#748b97)}`,
`<label><input type="checkbox"><slot></slot></label>`);
define('study-row',`
:host{display:flex;height:15px;background:#cbd9e1;border-bottom:1px solid #748b97;font-size:9px;font-weight:bold}
button{display:grid;place-items:center}
.io{display:flex;gap:4px;align-items:center;width:31px;padding-left:3px;border-right:1px solid #748b97}.ls{width:17px;border-right:1px solid #748b97}`,
`<div class="io"><button aria-label="Vender">${ICON.dn}</button><button aria-label="Comprar">${ICON.upg}</button></div>
<study-chip style="width:47px">Precio</study-chip><button class="ls" aria-label="Lista">${ICON.list}</button>
<study-chip style="width:64px">Cierre (W)</study-chip>
<study-chip style="width:137px;--mark:#748b97">Tunel Domenec v4 (t t t t t)</study-chip>
<study-chip style="width:115px;--edge:transparent;--mark:linear-gradient(90deg,#000 25%,#28d8f0 25% 50%,#e8e040 50% 70%,#102090 70%)">Control Total Doc v.6</study-chip>
<study-chip style="width:141px;--mark:#000;--edge:#000">Multi Avisos (3 f 3 1,5 70 f f)</study-chip>
<study-chip style="width:196px">DS_CotasHist (1 t t t 3 1 1 t f f f f f f f ...)</study-chip>`);
define('pick-list',`
:host{display:flex;align-items:center;justify-content:space-between;height:100%;padding:0 5px;font-size:9px;font-weight:bold;border-right:1px solid #6f8995;flex:none}
select{appearance:none;flex:1;min-width:0;outline:none}svg{pointer-events:none;flex:none}`,
`<select></select>${ICON.chev}`,(h,r)=>{const s=r.querySelector('select');s.setAttribute('aria-label',h.getAttribute('name'));s.add(new Option(h.getAttribute('value')));});
define('frame-button',`
:host{display:block}button{height:16px;width:100%;border:1px solid #738c99;border-radius:3px;font-size:9px;font-weight:bold;background:#adc7d3;white-space:nowrap}
:host([on]) button{background:#8fa5b0}`,`<button type="button"><slot></slot></button>`);
define('main-toolbar',`
:host{display:flex;align-items:center;height:23px;flex:none;background:linear-gradient(#b9d5e1,#9bbac8);border-top:1px solid #4a6475;border-bottom:2px solid #587280}
.cell{height:100%;display:grid;place-items:center;border-right:1px solid #6f8995;flex:none}
.set{display:flex;gap:3px;padding:0 3px;height:100%;align-items:center;border-right:1px solid #6f8995;flex:none}
.ind{display:flex;align-items:center;gap:3px;width:85px;padding-left:5px;height:100%;font-weight:bold;border-right:1px solid #6f8995;flex:none}
.info{width:10px;height:11px;margin-left:8px;background:#e8eef1;border:1px solid #8aa0ab;font-weight:bold;line-height:9px;text-align:center;font-size:9px;color:#667}
.dot{width:8px;height:8px;border-radius:50%;background:#858c90;border:1px solid #b5c0c6;margin:0 9px 0 8px}
.up{width:40px;height:14px;line-height:12px;text-align:center;background:#50dc50;border:1px solid #35b838;border-radius:3px;color:#fff;font-size:9px}
b{margin:0 4px;font-size:9px}.name{font-size:9px}.grow{flex:1}.win{display:flex;gap:4px;width:46px;justify-content:center;color:#64808d}`,
`<button class="cell" style="width:23px" aria-label="Tipo de gráfico">${ICON.candles}</button><button class="cell" style="width:16px" aria-label="Enlazar">${ICON.link}</button>
<pick-list style="width:45px" name="Valor" value="DOW"></pick-list>
<div class="set" style="width:216px">${[['144s',26],['1m',19],['12m',24],['56m',24],['1h',17],['4h',17],['D',14],['W',15],['M',14],['Q',13]].map(([t,w])=>`<frame-button style="width:${w}px"${t==='Q'?' on':''}>${t}</frame-button>`).join('')}</div>
<pick-list style="width:67px" name="Periodo" value="1 trimestre"></pick-list>
<div class="set" style="width:92px">${[['5kU',24],['10kU',28],['35kU',28]].map(([t,w])=>`<frame-button style="width:${w}px"${t==='10kU'?' on':''}>${t}</frame-button>`).join('')}</div>
<pick-list style="width:85px" name="Unidades" value="10 k unidades"></pick-list>
<button class="ind">${ICON.ind}Indicadores</button><button class="cell" style="width:14px" aria-label="Más indicadores">${ICON.chev}</button>
<span class="info">i</span><span class="dot"></span><span class="up">+0,84 %</span><b>17 oct 2025</b><span class="name">Wall Street Cash (1€)</span>
<span class="grow"></span><button class="cell" style="width:21px;border-left:1px solid #6f8995" aria-label="Sincronizar">${ICON.sync}</button>
<span class="win"><button aria-label="Minimizar">${svg(10,12,'<path d="M1 9.500h8" stroke="#64808d" stroke-width="1.600"/>')}</button><button aria-label="Restaurar">${svg(10,12,'<path d="M3.500 4V1.500h6v5H7M1.500 4.500h5v5h-5z" stroke="#64808d" stroke-width="1.300"/>')}</button><button aria-label="Cerrar">${svg(10,12,'<path d="M1.500 2l7 8M8.500 2l-7 8" stroke="#64808d" stroke-width="1.600"/>')}</button></span>`);
const RAIL=['cursor','lens','lensbox','bellline','bell','fibo1','fibo2','rect1','rect2','arrow','note','bubble','seg','rayg','rayr','ruler','wave'].map(k=>ICON[k]).concat([ell('#f02030','#b0959f'),ell('#8a5c34','#92a0a2'),ell('#168a30','#86ae9a'),ell('#20e828','#86c8a8'),dl('#222',1.200),dl('#35b045',2),dl('#f01818',2),hl('#222',1.200),hl('#f09a90',2),hl('#10f020',2),hl('#108018',2),hl('#f01010',2),hl('#6d9cf8',2),hl('#0a1ab8',2),ICON.vline,ICON.angle,ICON.circ,ICON.elliott,ICON.abc,ICON.check,ICON.thumb,ICON.cross,ICON.warn,ICON.up]);
define('tool-rail',`
:host{display:flex;flex-direction:column;width:28px;flex:none;overflow:hidden;background:#9dbac7;border-left:1px solid #4a6475;border-right:1px solid #748b97}
button{display:grid;place-items:center;height:22px;width:100%;flex:none}
.top{height:12px;border-bottom:1px solid #86a0ac}.on{background:#8da5b1;border:1px solid #738c99;border-radius:3px;width:22px;margin-left:2px}
.list{flex:1;min-height:0;overflow:hidden;display:flex;flex-direction:column}
.cut{height:22px}.more{height:11px;background:#b9d5e1;border:1px solid #6f8995;border-width:1px 0}.cfg{height:28px}.dots{height:26px}`,
`<button class="top" aria-label="Subir">${svg(8,6,'<path d="M1 5l3-3 3 3" stroke="#667f8b" stroke-width="1.200"/>')}</button>
<div class="list">${RAIL.map((s,i)=>`<button aria-label="Herramienta ${i+1}"${i?'':' class="on"'}>${s}</button>`).join('')}<button class="cut" aria-label="Herramienta 42">${svg(20,16,'<path d="M7.500 3h5v6H15l-5 6-5-6h2.500z" fill="#e81818"/>')}</button></div>
<button class="more" aria-label="Bajar">${ICON.chev}</button><button class="cfg" aria-label="Configurar">${ICON.gear}</button><button class="dots" aria-label="Más">${ICON.dots}</button>`);
define('bottom-bar',`
:host{display:flex;align-items:center;height:21px;flex:none;background:#9dbac7}
button{display:grid;place-items:center;height:20px;flex:none}
.edit{width:28px;border-right:1px solid #748b97;background:#8da5b1;height:21px}
.grp{display:flex;gap:4px;padding-left:1px;flex:none}.grp button{width:17px}
.more{width:15px;font-size:14px;color:#334}
.bar{flex:1;display:flex;height:14px;border:1px solid #748b97;background:#9dbac7;margin-right:3px}
.bar button{width:12px;height:12px;background:linear-gradient(#bcdae4,#a4c4d0);border-right:1px solid #748b97}.bar button:last-child{border:0;border-left:1px solid #748b97}
.gap{flex:383}.thumb{flex:1209;background:linear-gradient(#b9dce6,#94bac6);border-left:1px solid #748b97}
.end{display:flex;flex:none}.end button{width:22px}.end button:last-child{width:18px}`,
`<button class="edit" aria-label="Dibujar">${ICON.pencil}</button>
<div class="grp">${[['share','Compartir'],['chat','Chat'],['doc','Informe'],['book','Órdenes'],['wins','Ventanas']].map(([k,n])=>`<button aria-label="${n}">${ICON[k]}</button>`).join('')}</div>
<button class="more" aria-label="Plegar">«</button>
<div class="bar"><button aria-label="Izquierda">${svg(6,8,'<path d="M4.500 1.500L2 4l2.500 2.500" stroke="#112" stroke-width="1.400"/>')}</button><span class="gap"></span><span class="thumb"></span><button aria-label="Derecha">${svg(6,8,'<path d="M1.500 1.500L4 4 1.500 6.500" stroke="#112" stroke-width="1.400"/>')}</button></div>
<div class="end">${[['undo','Deshacer'],['redo','Rehacer'],['wrench','Ajustes'],['zfit','Ajustar zoom'],['zout','Alejar'],['zin','Acercar'],['kbd','Teclado']].map(([k,n])=>`<button aria-label="${n}">${ICON[k]}</button>`).join('')}</div>`);
define('trading-window',`
:host{display:flex;flex-direction:column;height:100vh;overflow:hidden}
main{display:flex;flex:1;min-height:0}.charts{flex:1;min-width:0;display:flex;flex-direction:column;background:#fff}
.p1{flex:1}.p2{height:88px;flex:none}.p3{height:81px;flex:none}.p4{height:76px;flex:none}.p5{height:56px;flex:none}`,
`<main-toolbar></main-toolbar>
<main><tool-rail></tool-rail><div class="charts">
<chart-pane class="p1" kind="price"><study-row></study-row></chart-pane>
<chart-pane class="p2" kind="trenes"><pane-title style="--b:#000">Sistema de trenes Doc v4 (f f)</pane-title></chart-pane>
<chart-pane class="p3" kind="willy"><pane-title>Willy Doc (t)</pane-title></chart-pane>
<chart-pane class="p4" kind="awe"><pane-title>Awesome Evolution Doc</pane-title></chart-pane>
<chart-pane class="p5" kind="barra"><pane-title style="--a:#000">Barra Fuerza Fondo Mercado v4 (f)</pane-title></chart-pane>
<time-axis></time-axis></div></main>
<bottom-bar></bottom-bar>`);
</script>
</body>
</html>
